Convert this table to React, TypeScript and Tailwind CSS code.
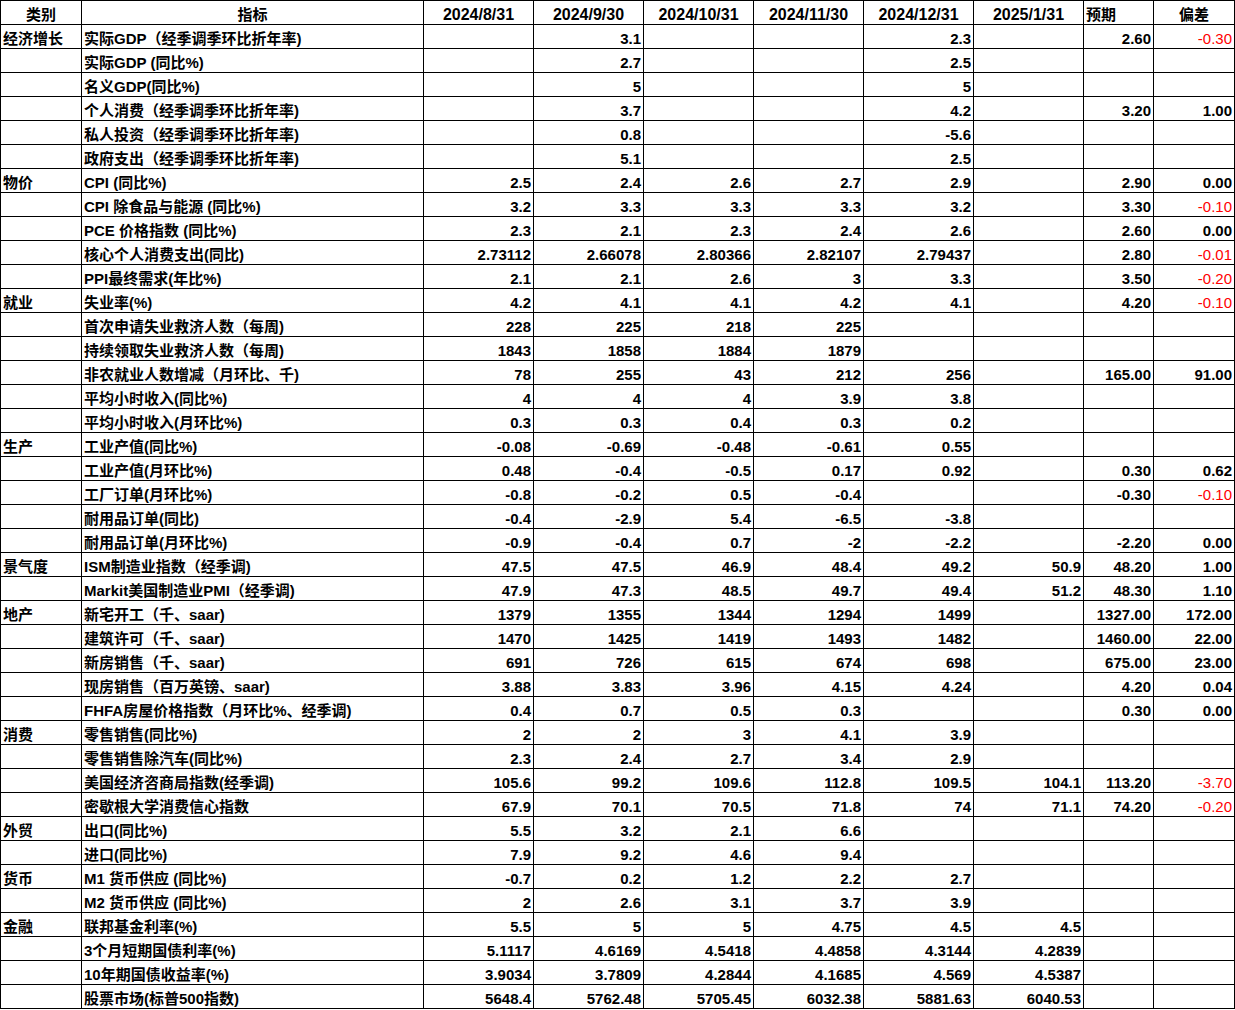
import React from "react";

type Row = {
  cat?: string;
  name: string;
  vals: (string | number | null)[];
  exp?: string;
  dev?: string;
};

const rows: Row[] = [
  { cat: "经济增长", name: "实际GDP（经季调季环比折年率)", vals: [null, 3.1, null, null, 2.3, null], exp: "2.60", dev: "-0.30" },
  { name: "实际GDP (同比%)", vals: [null, 2.7, null, null, 2.5, null] },
  { name: "名义GDP(同比%)", vals: [null, 5, null, null, 5, null] },
  { name: "个人消费（经季调季环比折年率)", vals: [null, 3.7, null, null, 4.2, null], exp: "3.20", dev: "1.00" },
  { name: "私人投资（经季调季环比折年率)", vals: [null, 0.8, null, null, -5.6, null] },
  { name: "政府支出（经季调季环比折年率)", vals: [null, 5.1, null, null, 2.5, null] },
  { cat: "物价", name: "CPI (同比%)", vals: [2.5, 2.4, 2.6, 2.7, 2.9, null], exp: "2.90", dev: "0.00" },
  { name: "CPI 除食品与能源 (同比%)", vals: [3.2, 3.3, 3.3, 3.3, 3.2, null], exp: "3.30", dev: "-0.10" },
  { name: "PCE 价格指数 (同比%)", vals: [2.3, 2.1, 2.3, 2.4, 2.6, null], exp: "2.60", dev: "0.00" },
  { name: "核心个人消费支出(同比)", vals: [2.73112, 2.66078, 2.80366, 2.82107, 2.79437, null], exp: "2.80", dev: "-0.01" },
  { name: "PPI最终需求(年比%)", vals: [2.1, 2.1, 2.6, 3, 3.3, null], exp: "3.50", dev: "-0.20" },
  { cat: "就业", name: "失业率(%)", vals: [4.2, 4.1, 4.1, 4.2, 4.1, null], exp: "4.20", dev: "-0.10" },
  { name: "首次申请失业救济人数（每周)", vals: [228, 225, 218, 225, null, null] },
  { name: "持续领取失业救济人数（每周)", vals: [1843, 1858, 1884, 1879, null, null] },
  { name: "非农就业人数增减（月环比、千)", vals: [78, 255, 43, 212, 256, null], exp: "165.00", dev: "91.00" },
  { name: "平均小时收入(同比%)", vals: [4, 4, 4, 3.9, 3.8, null] },
  { name: "平均小时收入(月环比%)", vals: [0.3, 0.3, 0.4, 0.3, 0.2, null] },
  { cat: "生产", name: "工业产值(同比%)", vals: [-0.08, -0.69, -0.48, -0.61, 0.55, null] },
  { name: "工业产值(月环比%)", vals: [0.48, -0.4, -0.5, 0.17, 0.92, null], exp: "0.30", dev: "0.62" },
  { name: "工厂订单(月环比%)", vals: [-0.8, -0.2, 0.5, -0.4, null, null], exp: "-0.30", dev: "-0.10" },
  { name: "耐用品订单(同比)", vals: [-0.4, -2.9, 5.4, -6.5, -3.8, null] },
  { name: "耐用品订单(月环比%)", vals: [-0.9, -0.4, 0.7, -2, -2.2, null], exp: "-2.20", dev: "0.00" },
  { cat: "景气度", name: "ISM制造业指数（经季调)", vals: [47.5, 47.5, 46.9, 48.4, 49.2, 50.9], exp: "48.20", dev: "1.00" },
  { name: "Markit美国制造业PMI（经季调)", vals: [47.9, 47.3, 48.5, 49.7, 49.4, 51.2], exp: "48.30", dev: "1.10" },
  { cat: "地产", name: "新宅开工（千、saar)", vals: [1379, 1355, 1344, 1294, 1499, null], exp: "1327.00", dev: "172.00" },
  { name: "建筑许可（千、saar)", vals: [1470, 1425, 1419, 1493, 1482, null], exp: "1460.00", dev: "22.00" },
  { name: "新房销售（千、saar)", vals: [691, 726, 615, 674, 698, null], exp: "675.00", dev: "23.00" },
  { name: "现房销售（百万英镑、saar)", vals: [3.88, 3.83, 3.96, 4.15, 4.24, null], exp: "4.20", dev: "0.04" },
  { name: "FHFA房屋价格指数（月环比%、经季调)", vals: [0.4, 0.7, 0.5, 0.3, null, null], exp: "0.30", dev: "0.00" },
  { cat: "消费", name: "零售销售(同比%)", vals: [2, 2, 3, 4.1, 3.9, null] },
  { name: "零售销售除汽车(同比%)", vals: [2.3, 2.4, 2.7, 3.4, 2.9, null] },
  { name: "美国经济咨商局指数(经季调)", vals: [105.6, 99.2, 109.6, 112.8, 109.5, 104.1], exp: "113.20", dev: "-3.70" },
  { name: "密歇根大学消费信心指数", vals: [67.9, 70.1, 70.5, 71.8, 74, 71.1], exp: "74.20", dev: "-0.20" },
  { cat: "外贸", name: "出口(同比%)", vals: [5.5, 3.2, 2.1, 6.6, null, null] },
  { name: "进口(同比%)", vals: [7.9, 9.2, 4.6, 9.4, null, null] },
  { cat: "货币", name: "M1 货币供应 (同比%)", vals: [-0.7, 0.2, 1.2, 2.2, 2.7, null] },
  { name: "M2 货币供应 (同比%)", vals: [2, 2.6, 3.1, 3.7, 3.9, null] },
  { cat: "金融", name: "联邦基金利率(%)", vals: [5.5, 5, 5, 4.75, 4.5, 4.5] },
  { name: "3个月短期国债利率(%)", vals: [5.1117, 4.6169, 4.5418, 4.4858, 4.3144, 4.2839] },
  { name: "10年期国债收益率(%)", vals: [3.9034, 3.7809, 4.2844, 4.1685, 4.569, 4.5387] },
  { name: "股票市场(标普500指数)", vals: [5648.4, 5762.48, 5705.45, 6032.38, 5881.63, 6040.53] },
];

const dates = ["2024/8/31", "2024/9/30", "2024/10/31", "2024/11/30", "2024/12/31", "2025/1/31"];

const cell = "border border-black p-0 align-bottom leading-[18px] whitespace-nowrap overflow-hidden";

export default function App() {
  return (
    <div className="bg-white w-[1235px] h-[1010px] font-['Liberation_Sans','Noto_Sans_CJK_SC',sans-serif] font-bold text-black text-[15px]">
      <table className="table-fixed border-collapse w-[1234px]">
        <colgroup>
          <col className="w-[81px]" />
          <col className="w-[342px]" />
          {dates.map((d) => (
            <col key={d} className="w-[110px]" />
          ))}
          <col className="w-[70px]" />
          <col className="w-[81px]" />
        </colgroup>
        <thead>
          <tr className="h-[24px]">
            <th className={`${cell} text-center`}>类别</th>
            <th className={`${cell} text-center`}>指标</th>
            {dates.map((d) => (
              <th key={d} className={`${cell} text-center text-[16px]`}>
                {d}
              </th>
            ))}
            <th className={`${cell} text-left pl-[2px]`}>预期</th>
            <th className={`${cell} text-center`}>偏差</th>
          </tr>
        </thead>
        <tbody>
          {rows.map((r, i) => (
            <tr key={i} className="h-[24px]">
              <td className={`${cell} text-left pl-[2px]`}>{r.cat ?? ""}</td>
              <td className={`${cell} text-left pl-[2px]`}>{r.name}</td>
              {r.vals.map((v, j) => (
                <td key={j} className={`${cell} text-right pr-[2px]`}>
                  {v === null ? "" : String(v)}
                </td>
              ))}
              <td className={`${cell} text-right pr-[2px]`}>{r.exp ?? ""}</td>
              <td
                className={`${cell} text-right pr-[2px] ${
                  r.dev && r.dev.startsWith("-") ? "text-[#ff0000] font-normal" : ""
                }`}
              >
                {r.dev ?? ""}
              </td>
            </tr>
          ))}
        </tbody>
      </table>
    </div>
  );
}
